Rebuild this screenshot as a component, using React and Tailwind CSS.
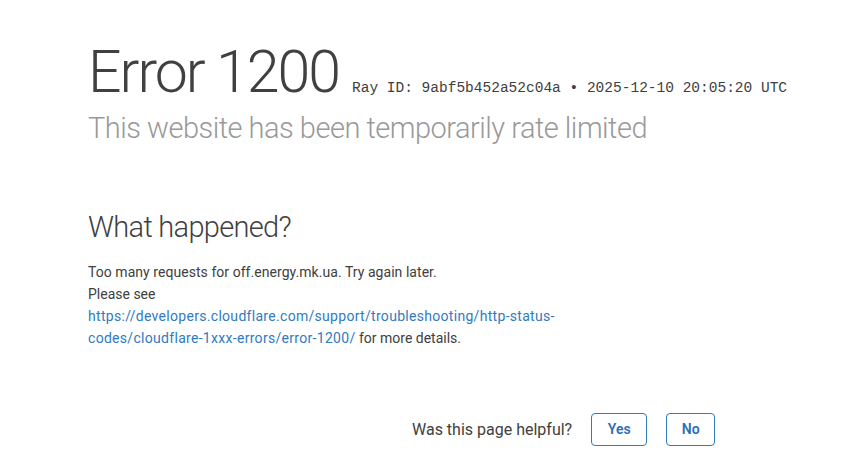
export default function App() {
  return (
    <div className="min-h-screen bg-white text-[#404040]" style={{ fontFamily: 'Roboto, "Noto Sans", sans-serif' }}>
      <div className="pl-[88px] pt-[40px]">
        <div className="flex items-baseline">
          <h1 className="text-[59px] leading-[1.1] font-light tracking-[-2px] text-[#404040]">Error 1200</h1>
          <span className="ml-[13px] text-[14.5px] text-[#404040]" style={{ fontFamily: '"Liberation Mono", monospace' }}>
            Ray ID: 9abf5b452a52c04a • 2025-12-10 20:05:20 UTC
          </span>
        </div>
        <h2 className="mt-[5px] text-[29px] leading-[1.3] font-light tracking-[-0.5px] text-[#999999]">
          This website has been temporarily rate limited
        </h2>

        <h2 className="mt-[61px] text-[29px] leading-[1.3] font-light tracking-[-0.7px] text-[#404040]">What happened?</h2>
        <div className="mt-[15px] w-[480px] text-[14px] leading-[22px] text-[#404040]">
          <p className="tracking-[0.05px]">Too many requests for off.energy.mk.ua. Try again later.</p>
          <p>
            Please see{' '}
            <a href="#" className="tracking-[0.3px] text-[#2f7bbf]">
              https://developers.cloudflare.com/support/troubleshooting/http-status-codes/cloudflare-1xxx-errors/error-1200/
            </a>{' '}
            for more details.
          </p>
        </div>

        <div className="mt-[64px] flex items-center pl-[324px]">
          <span className="text-[16px] text-[#404040]">Was this page helpful?</span>
          <button className="ml-[19px] h-[33px] w-[56px] rounded-[4px] border border-[#2f7bbf] text-[14px] font-semibold text-[#2c6fb5]">
            Yes
          </button>
          <button className="ml-[19px] h-[33px] w-[49px] rounded-[4px] border border-[#2f7bbf] text-[14px] font-semibold text-[#2c6fb5]">
            No
          </button>
        </div>
      </div>
    </div>
  );
}
